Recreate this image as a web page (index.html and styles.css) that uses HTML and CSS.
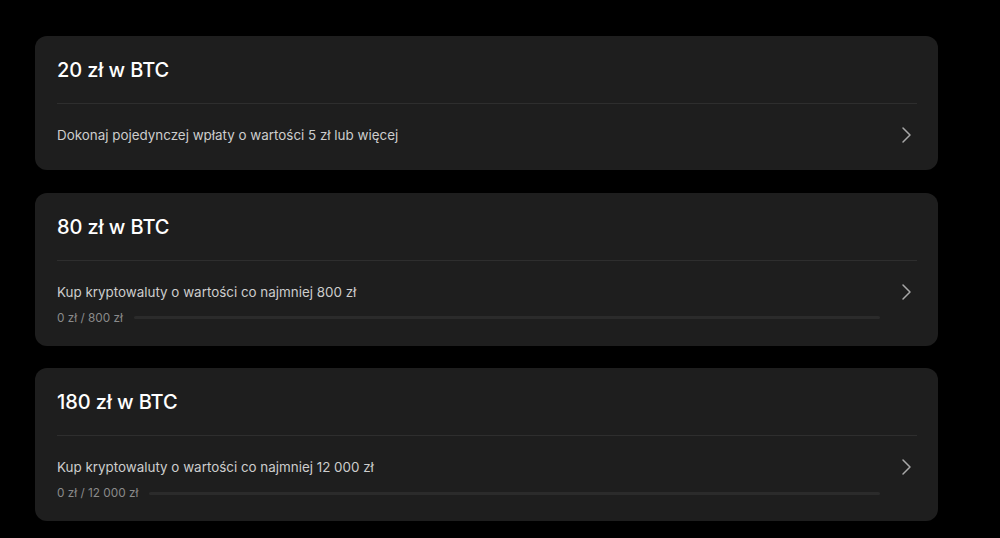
FILE: index.html
```html
<!DOCTYPE html>
<html lang="pl">
<head>
<meta charset="utf-8">
<link rel="stylesheet" href="styles.css">
</head>
<body>
<main class="list">
  <section class="card">
    <header class="card-head"><h2 class="title">20 zł w BTC</h2></header>
    <div class="card-body">
      <div class="info">
        <p class="desc">Dokonaj pojedynczej wpłaty o wartości 5 zł lub więcej</p>
      </div>
      <svg class="chev" viewBox="0 0 24 24" width="24" height="24"><path d="M10 5l7 7-7 7" fill="none" stroke="currentColor" stroke-width="1.5" stroke-linecap="round" stroke-linejoin="round"/></svg>
    </div>
  </section>
  <section class="card">
    <header class="card-head"><h2 class="title">80 zł w BTC</h2></header>
    <div class="card-body has-progress">
      <div class="info">
        <p class="desc">Kup kryptowaluty o wartości co najmniej 800 zł</p>
        <div class="progress"><span class="plabel">0 zł / 800 zł</span><div class="track"><div class="fill" style="width:0%"></div></div></div>
      </div>
      <svg class="chev" viewBox="0 0 24 24" width="24" height="24"><path d="M10 5l7 7-7 7" fill="none" stroke="currentColor" stroke-width="1.5" stroke-linecap="round" stroke-linejoin="round"/></svg>
    </div>
  </section>
  <section class="card">
    <header class="card-head"><h2 class="title">180 zł w BTC</h2></header>
    <div class="card-body has-progress">
      <div class="info">
        <p class="desc">Kup kryptowaluty o wartości co najmniej 12 000 zł</p>
        <div class="progress"><span class="plabel">0 zł / 12 000 zł</span><div class="track"><div class="fill" style="width:0%"></div></div></div>
      </div>
      <svg class="chev" viewBox="0 0 24 24" width="24" height="24"><path d="M10 5l7 7-7 7" fill="none" stroke="currentColor" stroke-width="1.5" stroke-linecap="round" stroke-linejoin="round"/></svg>
    </div>
  </section>
</main>
</body>
</html>
```
FILE: styles.css
```css
* { box-sizing: border-box; }
html, body { margin: 0; padding: 0; background: #000; }
body {
  font-family: Inter, "Noto Sans", "Liberation Sans", sans-serif;
  color: #fff;
  height: 538px;
  overflow: hidden;
}
.list {
  display: flex;
  flex-direction: column;
  gap: 22.5px;
  padding: 36px 62px 0 35px;
}
.card {
  background: #1e1e1e;
  border-radius: 12px;
  padding: 0 21px 0 22px;
}
.card-head {
  padding: 22px 0 21px;
  border-bottom: 1px solid #2e2e2e;
}
.title {
  margin: 0;
  font-size: 20px;
  line-height: 24px;
  font-weight: 500;
  letter-spacing: -0.1px;
}
.card-body {
  display: flex;
  align-items: flex-start;
  gap: 13px;
  padding: 21px 0 23px;
}
.card-body.has-progress { padding-bottom: 20px; }
.card-body .info { flex: 1; display: flex; flex-direction: column; gap: 8px; }
.desc {
  margin: 0;
  font-size: 13.4px;
  line-height: 20px;
  color: #cdcdcd;
}
.progress {
  display: flex;
  align-items: center;
  gap: 11px;
  height: 16px;
}
.plabel { font-size: 11.8px; color: #8a8a8a; white-space: nowrap; }
.track {
  flex: 1;
  height: 3px;
  border-radius: 2px;
  background: #2b2b2b;
  overflow: hidden;
}
.fill { height: 100%; background: #f7931a; }
.chev {
  color: #a8a8a8;
  flex: none;
  margin-top: -2px;
  width: 24px;
  height: 24px;
}
```
